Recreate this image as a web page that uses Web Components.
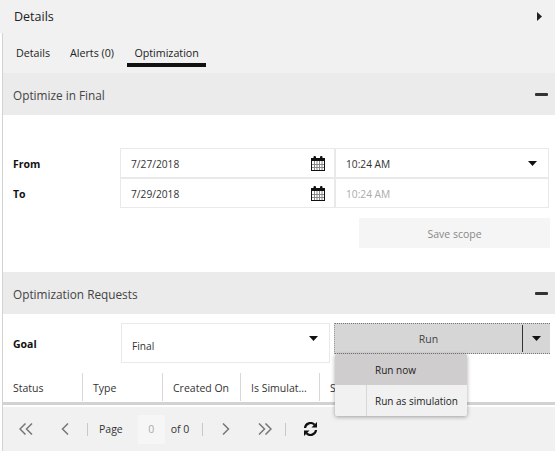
<!DOCTYPE html>
<html>
<head>
<meta charset="utf-8">
<style>
  html, body { margin: 0; padding: 0; background: #fff; }
  body { width: 555px; height: 472px; overflow: hidden; font: 11px "Open Sans", sans-serif; color: #222; }
</style>
</head>
<body>
<details-panel>
  <span slot="title">Details</span>
  <tab-strip></tab-strip>
  <section-bar slot="body" label="Optimize in Final"></section-bar>
  <scope-form slot="body"></scope-form>
  <section-bar slot="body" label="Optimization Requests"></section-bar>
  <goal-row slot="body"></goal-row>
  <grid-head slot="body"></grid-head>
  <grid-pager slot="body"></grid-pager>
</details-panel>

<script>
const caret = `<svg width="9" height="5" viewBox="0 0 9 5"><path d="M0 0h9L4.500 5z" fill="#111"/></svg>`;

class DetailsPanel extends HTMLElement {
  constructor() {
    super();
    this.attachShadow({ mode: "open" });
    this.shadowRoot.innerHTML = `
      <style>
        :host { display: block; }
        .top { height: 33px; background: #f1f1f1; display: flex; align-items: center; justify-content: space-between; padding: 0 13px 0 14px; font-size: 12.500px; color: #222; }
        .wrap { margin-left: 2px; border-left: 1px solid #d2d2d2; }
        .tabs { background: #f1f1f1; height: 40px; }
      </style>
      <div class="top">
        <slot name="title"></slot>
        <svg width="5" height="9" viewBox="0 0 5 9"><path d="M0 0l5 4.500L0 9z" fill="#222"/></svg>
      </div>
      <div class="wrap">
        <div class="tabs"><slot></slot></div>
        <slot name="body"></slot>
      </div>`;
  }
}

class TabStrip extends HTMLElement {
  constructor() {
    super();
    this.attachShadow({ mode: "open" });
    this.shadowRoot.innerHTML = `
      <style>
        :host { display: flex; height: 40px; padding-left: 3px; box-sizing: border-box; font-size: 10.700px; color: #222; }
        span { display: block; height: 30px; line-height: 40px; padding: 0 10px; white-space: nowrap; }
        .on { border-bottom: 4px solid #111; padding: 0 7.500px; margin-left: 3px; }
      </style>
      <span>Details</span><span>Alerts (0)</span><span class="on">Optimization</span>`;
  }
}

class SectionBar extends HTMLElement {
  constructor() {
    super();
    this.attachShadow({ mode: "open" });
    this.shadowRoot.innerHTML = `
      <style>
        :host { display: flex; height: 42px; align-items: center; justify-content: space-between; background: #ebebeb; padding: 0 7px 0 10px; font-size: 11.800px; color: #444; }
        span { padding-top: 2px; }
        i { display: block; width: 13px; height: 3px; margin-top: 1px; border-radius: 1px; background: #333; }
      </style>
      <span>${this.getAttribute("label")}</span><i></i>`;
  }
}

class TextField extends HTMLElement {
  constructor() {
    super();
    this.attachShadow({ mode: "open" });
    const w = this.getAttribute("w");
    const kind = this.getAttribute("kind");
    const cal = `<svg width="14" height="15" viewBox="0 0 14 15">
      <rect x=".5" y="2.500" width="13" height="12" fill="#fff" stroke="#111"/>
      <rect x="0" y="2" width="14" height="3" fill="#111"/>
      <rect x="2.500" y="0" width="2.500" height="4.500" rx="1" fill="#111"/><rect x="9" y="0" width="2.500" height="4.500" rx="1" fill="#111"/>
      <path d="M3.500 5v9M6 5v9M8.500 5v9M11 5v9M1 8.500h12M1 11.500h12" stroke="#888" fill="none"/>
    </svg>`;
    this.shadowRoot.innerHTML = `
      <style>
        :host { display: flex; box-sizing: border-box; width: ${w}px; height: 30px; align-items: center; justify-content: space-between; border: 1px solid #e9e9e9; padding: 0 ${kind === "time" ? 11 : 9}px 0 10px; font-size: 10.200px; color: ${kind === "off" ? "#aaa" : "#333"}; }
        span { padding-top: 2px; }
        svg { display: block; }
      </style>
      <span><slot></slot></span>
      ${kind === "date" ? cal : kind === "time" ? caret : ""}`;
  }
}

class ScopeForm extends HTMLElement {
  constructor() {
    super();
    this.attachShadow({ mode: "open" });
    this.shadowRoot.innerHTML = `
      <style>
        :host { display: block; height: 157px; box-sizing: border-box; padding-top: 33px; }
        .row { display: grid; grid-template-columns: 117px auto auto; justify-content: start; }
        b { padding: 1px 0 0 10px; font-size: 10.500px; font-weight: 700; color: #111; line-height: 30px; height: 29px; }
        .save { width: 191px; height: 30px; margin: 10px 0 0 356px; padding-top: 2px; box-sizing: border-box; background: #f5f5f5; color: #888; font-size: 10.500px; display: flex; align-items: center; justify-content: center; }
      </style>
      <div class="row"><b>From</b><text-field w="215" kind="date">7/27/2018</text-field><text-field w="214" kind="time">10:24 AM</text-field></div>
      <div class="row"><b>To</b><text-field w="215" kind="date">7/29/2018</text-field><text-field w="214" kind="off">10:24 AM</text-field></div>
      <div class="save">Save scope</div>`;
  }
}

class RunMenu extends HTMLElement {
  constructor() {
    super();
    this.attachShadow({ mode: "open" });
    this.shadowRoot.innerHTML = `
      <style>
        :host { position: absolute; z-index: 2; left: 0; top: 30px; width: 132px; height: 62px; background: #f1f1f1; border-radius: 2px; box-shadow: 0 1px 4px rgba(0,0,0,.35); font-size: 10px; color: #222; overflow: hidden; }
        div { height: 31px; line-height: 33px; padding-left: 40px; white-space: nowrap; }
        .hot { background: #cfcdcd; }
        .rest { background: linear-gradient(#d8d8d8,#d8d8d8) 31px 0 / 1px 100% no-repeat; }
      </style>
      <div class="hot">Run now</div><div class="rest">Run as simulation</div>`;
  }
}

class GoalRow extends HTMLElement {
  constructor() {
    super();
    this.attachShadow({ mode: "open" });
    this.shadowRoot.innerHTML = `
      <style>
        :host { display: grid; grid-template-columns: 118px 209px auto; height: 59px; box-sizing: border-box; padding-top: 9px; }
        b { padding: 1px 0 0 10px; font-size: 10.500px; font-weight: 700; color: #111; line-height: 40px; height: 39px; }
        .sel { box-sizing: border-box; height: 40px; border: 1px solid #e9e9e9; display: flex; justify-content: space-between; padding: 0 11px 0 10px; font-size: 10.200px; color: #333; }
        .sel span { padding-top: 15px; }
        .sel svg { margin-top: 12px; }
        .run { position: relative; margin-left: 4px; width: 216px; height: 31px; box-sizing: border-box; background: #d6d6d6; border: 1px dotted #777; border-right: 0; border-left-color: #999; display: flex; font-size: 10.500px; color: #444; }
        .run span { flex: 1; display: flex; align-items: center; justify-content: center; padding-top: 1px; }
        .run em { width: 27px; margin: 1px 0; border-left: 1px solid #333; display: flex; align-items: center; justify-content: center; }
      </style>
      <b>Goal</b>
      <div class="sel"><span>Final</span>${caret}</div>
      <div class="run"><span>Run</span><em>${caret}</em><run-menu></run-menu></div>`;
  }
}

class GridHead extends HTMLElement {
  constructor() {
    super();
    this.attachShadow({ mode: "open" });
    this.shadowRoot.innerHTML = `
      <style>
        :host { display: flex; height: 32px; box-sizing: border-box; border-bottom: 3px solid #d2d2d2; font-size: 10.500px; color: #333; }
        span { box-sizing: border-box; height: 28px; line-height: 30px; padding-left: 10px; border-right: 1px solid #d8d8d8; white-space: nowrap; overflow: hidden; }
        span:last-child { border-right: 0; }
      </style>
      <span style="width:80px">Status</span><span style="width:80px">Type</span><span style="width:78px">Created On</span><span style="width:79px">Is Simulat...</span><span style="width:60px">S</span>`;
  }
}

class GridPager extends HTMLElement {
  constructor() {
    super();
    this.attachShadow({ mode: "open" });
    const ch = d => `<svg width="14" height="12" viewBox="0 0 14 12"><path d="${d}" fill="none" stroke="#777" stroke-width="1.500"/></svg>`;
    this.shadowRoot.innerHTML = `
      <style>
        :host { display: flex; margin-top: 2px; height: 44px; align-items: center; background: #f1f1f1; font-size: 10.500px; color: #333; }
        svg { display: block; flex: none; }
        i { display: block; width: 1px; height: 13px; background: #c8c8c8; flex: none; }
        .num { width: 27px; height: 29px; background: #f6f6f6; color: #aaa; display: flex; align-items: center; justify-content: center; margin: 0 6px 0 15px; }
      </style>
      <span style="margin-left:16px;display:block">${ch("M6.500 .5L1 6l5.500 5.500M13 .5L7.500 6l5.500 5.500")}</span>
      <span style="margin-left:27px;display:block">${ch("M8 .5L2.500 6 8 11.500")}</span>
      <i style="margin-left:13px"></i>
      <span style="margin-left:11px">Page</span>
      <span class="num">0</span>
      <span>of 0</span>
      <i style="margin-left:13px"></i>
      <span style="margin-left:18px;display:block">${ch("M2 .5L7.500 6 2 11.500")}</span>
      <span style="margin-left:23px;display:block">${ch("M1 .5L6.500 6 1 11.500M7.500 .5L13 6l-5.500 5.500")}</span>
      <i style="margin-left:13px"></i>
      <svg style="margin-left:17px" width="15" height="14" viewBox="0 0 15 14">
        <path d="M2 6A5.500 5.500 0 0 1 11.500 2.800" fill="none" stroke="#111" stroke-width="2.200"/>
        <path d="M14 0v5.500H8.500z" fill="#111"/>
        <path d="M13 8A5.500 5.500 0 0 1 3.500 11.200" fill="none" stroke="#111" stroke-width="2.200"/>
        <path d="M1 14V8.500h5.500z" fill="#111"/>
      </svg>`;
  }
}

customElements.define("details-panel", DetailsPanel);
customElements.define("tab-strip", TabStrip);
customElements.define("section-bar", SectionBar);
customElements.define("text-field", TextField);
customElements.define("scope-form", ScopeForm);
customElements.define("run-menu", RunMenu);
customElements.define("goal-row", GoalRow);
customElements.define("grid-head", GridHead);
customElements.define("grid-pager", GridPager);
</script>
</body>
</html>
